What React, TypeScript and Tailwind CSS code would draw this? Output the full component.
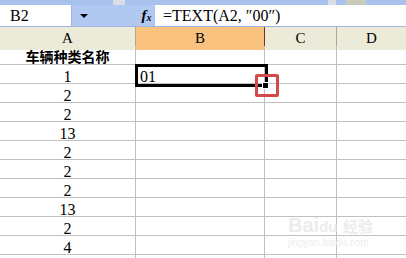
import React from "react";

const rows = ["1", "2", "2", "13", "2", "2", "2", "13", "2", "4"];

const serif = { fontFamily: '"Liberation Serif", "Noto Sans CJK SC", serif' };

const App = () => {
  return (
    <div className="relative w-[406px] h-[258px] overflow-hidden bg-white" style={serif}>
      {/* toolbar remnant */}
      <div className="h-[5px] bg-[#a8c2ee] flex">
        <div className="w-[113px]" />
        <div className="w-[12px] bg-[#d8dde8]" />
        <div className="w-[203px]" />
        <div className="w-[8px] bg-[#d8dde8]" />
        <div className="w-[10px]" />
        <div className="w-[20px] bg-[#c8cbb8]" />
      </div>

      {/* name box + formula bar */}
      <div className="h-[22px] flex bg-[#b1c9f1] border-b border-[#9db6df]">
        <div className="w-[72px] bg-white flex items-center pl-[10px] text-[16px] text-black border-r border-[#9db6df]">
          B2
        </div>
        <div className="w-[66px] flex items-center pl-[8px]">
          <div className="w-0 h-0 border-l-[4px] border-r-[4px] border-t-[4px] border-l-transparent border-r-transparent border-t-black" />
        </div>
        <div className="w-[17px] flex items-center justify-center italic font-bold text-[15px] text-black leading-none">
          f<span className="text-[10px] mt-[4px]">x</span>
        </div>
        <div className="flex-1 bg-white flex items-center pl-[8px] text-[16px] text-black">
          =TEXT(A2, ″00″)
        </div>
      </div>

      {/* column headers */}
      <div className="grid grid-cols-[136px_129px_72px_69px] h-[19px] text-[15px] text-black border-b border-[#a9a797]">
        <div className="bg-[#ecead9] border-r border-[#aca899] flex items-center justify-center">A</div>
        <div className="bg-[#f9c27f] border-r border-[#6b3a1a] flex items-center justify-center">B</div>
        <div className="bg-[#ecead9] border-r border-[#aca899] flex items-center justify-center">C</div>
        <div className="bg-[#ecead9] flex items-center justify-center">D</div>
      </div>

      {/* title row */}
      <div className="grid grid-cols-[136px_129px_72px_69px] h-[19px] border-b border-[#c0c0c0]">
        <div
          className="border-r border-[#c0c0c0] flex items-center justify-center text-[14px] font-bold text-black"
          style={{ fontFamily: '"Noto Sans CJK SC", sans-serif' }}
        >
          车辆种类名称
        </div>
        <div className="border-r border-[#c0c0c0]" />
        <div className="border-r border-[#c0c0c0]" />
        <div />
      </div>

      {rows.map((v, i) => (
        <div
          key={i}
          className="grid grid-cols-[136px_129px_72px_69px] h-[19px] border-b border-[#c0c0c0] text-[16px] text-black"
        >
          <div className="border-r border-[#c0c0c0] flex items-center justify-center">{v}</div>
          <div className="border-r border-[#c0c0c0] flex items-center pl-[4px]">
            {i === 0 ? "01" : ""}
          </div>
          <div className="border-r border-[#c0c0c0]" />
          <div />
        </div>
      ))}

      {/* selection border */}
      <div className="absolute left-[135px] top-[64px] w-[133px] h-[23px] border-[3px] border-black" />
      {/* fill handle */}
      <div className="absolute left-[262px] top-[82px] w-[7px] h-[7px] bg-black border border-white" />
      {/* red highlight */}
      <div className="absolute left-[255px] top-[74px] w-[24px] h-[23px] border-[3px] border-[#d24a4a] rounded-[2px]" />

      {/* watermark */}
      <div
        className="absolute left-[288px] top-[215px] text-[20px] font-bold text-[#ececec] leading-none"
        style={{ fontFamily: '"Liberation Sans", "Noto Sans CJK SC", sans-serif' }}
      >
        Bai<span className="text-[15px]">du</span> <span className="text-[15px]">经验</span>
      </div>
      <div
        className="absolute left-[288px] top-[238px] text-[10px] text-[#eeeeee] leading-none"
        style={{ fontFamily: '"Liberation Sans", sans-serif' }}
      >
        jingyan.baidu.com
      </div>
    </div>
  );
};

export default App;
